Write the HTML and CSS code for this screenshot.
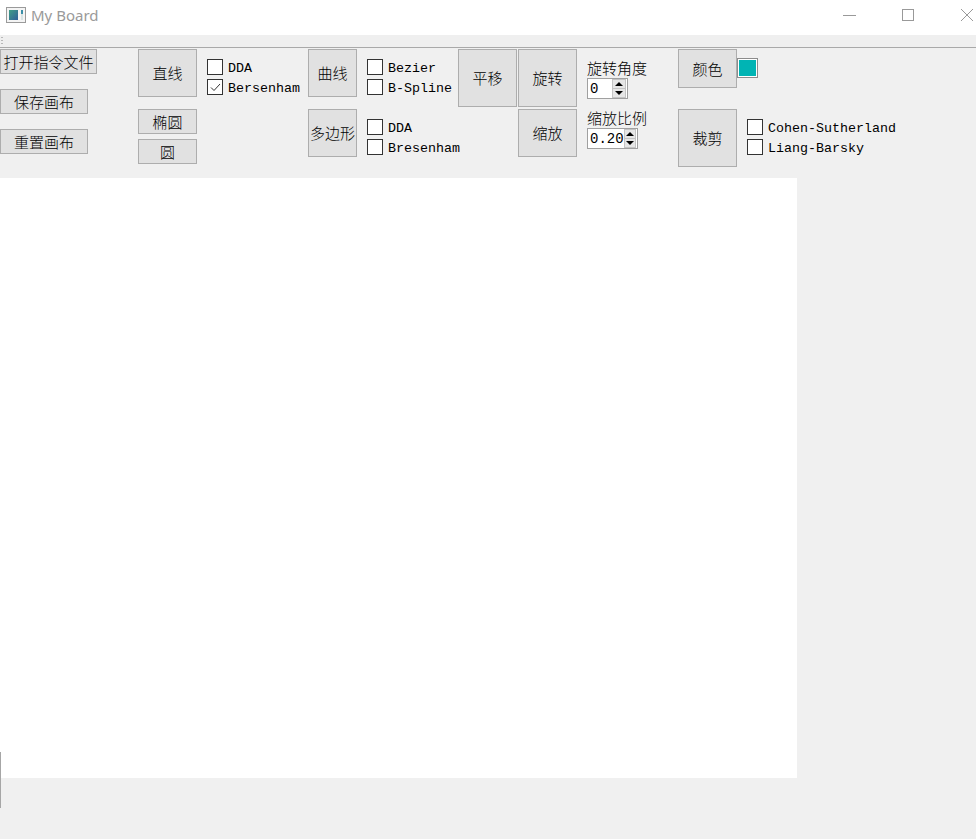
FILE: index.html
```html
<!DOCTYPE html>
<html lang="zh">
<head>
<meta charset="utf-8">
<title>My Board</title>
<link rel="stylesheet" href="styles.css">
</head>
<body>
<div class="window">
  <header class="titlebar">
    <svg class="app-icon" width="20" height="16" viewBox="0 0 20 16">
      <defs>
        <linearGradient id="g1" x1="0" y1="0" x2="1" y2="1">
          <stop offset="0" stop-color="#3f9e86"/>
          <stop offset="1" stop-color="#2f5f9a"/>
        </linearGradient>
      </defs>
      <rect x="0.5" y="0.5" width="19" height="15" fill="#f4f4f4" stroke="#9a9a9a"/>
      <rect x="3" y="3" width="9" height="10" fill="url(#g1)"/>
      <rect x="15" y="3" width="2" height="4" fill="#3a8fa8"/>
      <rect x="15" y="7" width="2" height="6" fill="#d8e4e4"/>
    </svg>
    <span class="title">My Board</span>
    <div class="controls">
      <span class="ctl"><svg width="14" height="12" viewBox="0 0 14 12"><line x1="0" y1="6.5" x2="13" y2="6.5" stroke="#999" stroke-width="1"/></svg></span>
      <span class="ctl"><svg width="14" height="14" viewBox="0 0 14 14"><rect x="1.5" y="1.5" width="11" height="11" fill="none" stroke="#999" stroke-width="1"/></svg></span>
      <span class="ctl ctl-close"><svg width="14" height="14" viewBox="0 0 14 14"><path d="M1 1 L13 13 M13 1 L1 13" stroke="#999" stroke-width="1"/></svg></span>
    </div>
  </header>
  <div class="grip"><span class="grip-dots"></span></div>

  <div class="toolbar">
    <div class="col c1">
      <button class="btn b-open">打开指令文件</button>
      <button class="btn b-small">保存画布</button>
      <button class="btn b-small">重置画布</button>
    </div>

    <div class="col c2">
      <button class="btn h48">直线</button>
      <button class="btn h25 mt12">椭圆</button>
      <button class="btn h25 mt5">圆</button>
    </div>

    <div class="col c3">
      <label class="chk"><span class="box"></span><span class="lbl">DDA</span></label>
      <label class="chk"><span class="box"><svg width="13" height="13" viewBox="0 0 13 13"><polyline points="2,6.5 5,9.5 11,3" fill="none" stroke="#333" stroke-width="1"/></svg></span><span class="lbl">Bersenham</span></label>
    </div>

    <div class="col c4">
      <button class="btn h48">曲线</button>
      <button class="btn h48 mt12">多边形</button>
    </div>

    <div class="col c5">
      <label class="chk"><span class="box"></span><span class="lbl">Bezier</span></label>
      <label class="chk"><span class="box"></span><span class="lbl">B-Spline</span></label>
      <label class="chk mt20"><span class="box"></span><span class="lbl">DDA</span></label>
      <label class="chk"><span class="box"></span><span class="lbl">Bresenham</span></label>
    </div>

    <div class="col c6">
      <button class="btn h58">平移</button>
    </div>

    <div class="col c7">
      <button class="btn h58">旋转</button>
      <button class="btn h48 mt2">缩放</button>
    </div>

    <div class="col c8">
      <div class="field-label">旋转角度</div>
      <div class="spin spin-a">
        <span class="spin-val">0</span>
        <span class="spin-btns"><span class="arr up"></span><span class="arr down"></span></span>
      </div>
      <div class="field-label mt9">缩放比例</div>
      <div class="spin spin-b">
        <span class="spin-val">0.20</span>
        <span class="spin-btns"><span class="arr up"></span><span class="arr down"></span></span>
      </div>
    </div>

    <div class="col c9">
      <button class="btn h39">颜色</button>
      <button class="btn h58 mt21">裁剪</button>
    </div>

    <div class="col c10">
      <div class="swatch"></div>
      <div class="clip-group">
        <label class="chk"><span class="box"></span><span class="lbl">Cohen-Sutherland</span></label>
        <label class="chk"><span class="box"></span><span class="lbl">Liang-Barsky</span></label>
      </div>
    </div>
  </div>

  <div class="canvas"></div>
  <div class="edge-line"></div>
</div>
</body>
</html>
```

FILE: styles.css
```css
* { box-sizing: border-box; }

html, body {
  margin: 0;
  padding: 0;
  background: #f0f0f0;
}

body {
  width: 976px;
  height: 839px;
  overflow: hidden;
  font-family: "Noto Sans CJK SC", "Noto Sans", sans-serif;
}

.window {
  position: relative;
  width: 976px;
  height: 839px;
  background: #f0f0f0;
}

/* title bar */
.titlebar {
  height: 35px;
  background: #ffffff;
  display: flex;
  align-items: flex-start;
}

.app-icon {
  margin: 7px 0 0 6px;
  flex: none;
}

.title {
  margin: 5px 0 0 5px;
  font-family: "Noto Sans", "Open Sans", sans-serif;
  font-size: 15px;
  line-height: 20px;
  color: #9a9a9a;
}

.controls {
  margin-left: auto;
  display: flex;
  height: 30px;
}

.ctl {
  width: 58px;
  height: 30px;
  display: flex;
  align-items: center;
  justify-content: center;
}

.ctl-close {
  width: 39px;
  justify-content: flex-start;
  padding-left: 23px;
}

/* toolbar grip strip */
.grip {
  height: 13px;
  background: #efefef;
  border-bottom: 1px solid #a9a9a9;
  position: relative;
}

.grip-dots {
  position: absolute;
  left: 1px;
  top: 2px;
  width: 2px;
  height: 7px;
  background: repeating-linear-gradient(to bottom, #b8b8b8 0 1px, transparent 1px 3px);
}

/* toolbar */
.toolbar {
  height: 130px;
  display: flex;
  align-items: flex-start;
}

.col {
  display: flex;
  flex-direction: column;
  align-items: flex-start;
  flex: none;
}

.c1 { width: 97px; padding-top: 1px; gap: 15px; }
.c2 { width: 59px; margin-left: 41px; padding-top: 1px; }
.c3 { width: 101px; margin-left: 10px; padding-top: 9px; }
.c4 { width: 49px; padding-top: 1px; }
.c5 { width: 91px; margin-left: 10px; padding-top: 9px; }
.c6 { width: 59px; padding-top: 1px; }
.c7 { width: 59px; margin-left: 1px; padding-top: 1px; }
.c8 { width: 91px; margin-left: 10px; padding-top: 10px; }
.c9 { width: 59px; padding-top: 1px; }
.c10 { padding-top: 10px; }

.btn {
  display: flex;
  align-items: center;
  justify-content: center;
  width: 100%;
  padding: 0;
  margin: 0;
  background: #e1e1e1;
  border: 1px solid #adadad;
  border-radius: 0;
  font-family: "Noto Sans CJK SC", sans-serif;
  font-weight: 300;
  font-size: 15px;
  line-height: 18px;
  color: #000;
  white-space: nowrap;
}

.b-open { width: 97px; height: 25px; }
.b-small { width: 88px; height: 25px; }

.h25 { height: 25px; }
.h39 { height: 39px; }
.h48 { height: 48px; }
.h58 { height: 58px; }

.mt2 { margin-top: 2px; }
.mt5 { margin-top: 5px; }
.mt9 { margin-top: 9px; }
.mt12 { margin-top: 12px; }
.mt20 { margin-top: 20px; }
.mt21 { margin-top: 21px; }

/* checkboxes */
.chk {
  display: flex;
  align-items: center;
  height: 20px;
  white-space: nowrap;
}

.box {
  width: 16px;
  height: 16px;
  flex: none;
  background: #ffffff;
  border: 1px solid #333333;
  display: flex;
  align-items: center;
  justify-content: center;
}

.lbl {
  margin: 3px 0 0 5px;
  font-family: "Liberation Mono", "DejaVu Sans Mono", monospace;
  font-size: 13.33px;
  line-height: 16px;
  color: #000;
}

/* labels + spin boxes */
.field-label {
  height: 20px;
  font-size: 15px;
  font-weight: 300;
  line-height: 20px;
  color: #000;
  white-space: nowrap;
}

.spin {
  height: 21px;
  background: #ffffff;
  border: 1px solid #a0a0a0;
  display: flex;
  align-items: stretch;
}

.spin-a { width: 41px; }
.spin-b { width: 51px; }

.spin-val {
  flex: 1;
  padding: 1px 0 0 2px;
  font-family: "Liberation Mono", "DejaVu Sans Mono", monospace;
  font-size: 14px;
  line-height: 19px;
  color: #000;
}

.spin-btns {
  width: 14px;
  margin: 0 1px 0 0;
  display: flex;
  flex-direction: column;
}

.arr {
  flex: 1;
  background: #e6e6e6;
  border: 1px solid #c4c4c4;
  display: flex;
  align-items: center;
  justify-content: center;
  position: relative;
}

.arr.up { border-bottom: none; }

.arr::after {
  content: "";
  width: 0;
  height: 0;
  border-left: 4px solid transparent;
  border-right: 4px solid transparent;
}

.arr.up::after { border-bottom: 4px solid #000; }
.arr.down::after { border-top: 4px solid #000; }

/* colour swatch */
.swatch {
  width: 21px;
  height: 20px;
  border: 1px solid #8c8c8c;
  background: #00b4b4;
  box-shadow: inset 0 0 0 1px #ffffff;
}

.clip-group {
  margin: 39px 0 0 10px;
  display: flex;
  flex-direction: column;
}

/* drawing canvas */
.canvas {
  width: 797px;
  height: 600px;
  background: #ffffff;
}

.edge-line {
  position: absolute;
  left: 0;
  top: 752px;
  width: 1px;
  height: 56px;
  background: #a6a6a6;
}
```
